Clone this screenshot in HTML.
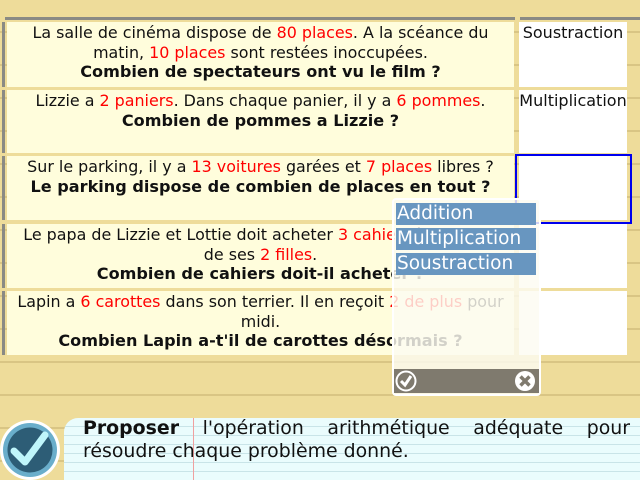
<!DOCTYPE html>
<html><head><meta charset="utf-8"><style>
*{margin:0;padding:0;box-sizing:border-box}
body{width:640px;height:480px;overflow:hidden;position:relative;font-family:"DejaVu Sans","Liberation Sans",sans-serif;
background:#eedc9a repeating-linear-gradient(to bottom,transparent 0,transparent 31px,#d9c584 31px,#d9c584 33px);}
.abs{position:absolute}
.q{position:absolute;left:7px;width:507px;background:#fffddc;text-align:center;font-size:15.9px;line-height:19.5px;color:#111;padding-top:1px;white-space:nowrap}
.q b{font-size:16.1px}
.r{color:#f00}
.a{position:absolute;left:519px;width:108px;background:#fff;text-align:center;font-size:16px;line-height:19px;color:#111;padding-top:1px;white-space:nowrap;overflow:visible}
.bar{position:absolute;left:2px;width:3px;background:#8a8a84}
.opt{position:absolute;left:396px;width:140px;height:22px;background:#6896c0;color:#fff;font-size:18.5px;line-height:21px;padding-left:1px;white-space:nowrap;overflow:hidden}
</style></head><body>
<div class="abs" style="left:5px;top:17px;width:510px;height:3px;background:#8a8a84"></div>
<div class="abs" style="left:520px;top:17px;width:120px;height:3px;background:#8a8a84"></div>
<div class="bar" style="top:22px;height:65px"></div>
<div class="bar" style="top:90px;height:63px"></div>
<div class="bar" style="top:156px;height:64px"></div>
<div class="bar" style="top:224px;height:64px"></div>
<div class="bar" style="top:291px;height:64px"></div>

<div class="q" style="top:22px;height:65px">La salle de cinéma dispose de <span class="r">80 places</span>. A la scéance du<br>matin, <span class="r">10 places</span> sont restées inoccupées.<br><b>Combien de spectateurs ont vu le film ?</b></div>
<div class="a" style="top:22px;height:65px">Soustraction</div>
<div class="q" style="top:90px;height:63px">Lizzie a <span class="r">2 paniers</span>. Dans chaque panier, il y a <span class="r">6 pommes</span>.<br><b>Combien de pommes a Lizzie ?</b></div>
<div class="a" style="top:90px;height:63px">Multiplication</div>
<div class="q" style="top:156px;height:64px">Sur le parking, il y a <span class="r">13 voitures</span> garées et <span class="r">7 places</span> libres ?<br><b>Le parking dispose de combien de places en tout ?</b></div>
<div class="a" style="top:156px;height:64px"></div>
<div class="abs" style="left:515px;top:154px;width:117px;height:70px;border:2px solid #0000ee"></div>
<div class="q" style="top:224px;height:64px">Le papa de Lizzie et Lottie doit acheter <span class="r">3 cahiers</span> à chacune<br>de ses <span class="r">2 filles</span>.<br><b>Combien de cahiers doit-il acheter ?</b></div>
<div class="a" style="top:224px;height:64px"></div>
<div class="q" style="top:291px;height:64px">Lapin a <span class="r">6 carottes</span> dans son terrier. Il en reçoit <span class="r">2 de plus</span> pour<br>midi.<br><b>Combien Lapin a-t'il de carottes désormais ?</b></div>
<div class="a" style="top:291px;height:64px"></div>

<div class="abs" style="left:392px;top:198px;width:149px;height:198px;background:rgba(253,251,242,0.82);border-radius:4px;border:2px solid #fff"></div>
<div class="opt" style="top:203px">Addition</div>
<div class="opt" style="top:228px">Multiplication</div>
<div class="opt" style="top:253px">Soustraction</div>
<div class="abs" style="left:394px;top:369px;width:145px;height:24px;background:#7f7a6e"></div>
<svg class="abs" style="left:394px;top:369px" width="145" height="24">
<circle cx="12" cy="12" r="9.5" fill="none" stroke="#fff" stroke-width="2"/>
<path d="M7 12 L11 16 L17 7" fill="none" stroke="#fff" stroke-width="3"/>
<circle cx="131" cy="12" r="10" fill="#fff"/>
<path d="M126.5 7.5 L135.5 16.5 M135.5 7.5 L126.5 16.5" stroke="#7f7a6e" stroke-width="3.5"/>
</svg>

<div class="abs" style="left:64px;top:418px;width:576px;height:62px;border-radius:14px 0 0 0;
background:#eafcfd repeating-linear-gradient(to bottom,transparent 0,transparent 8px,#c9e4e8 8px,#c9e4e8 9px)"></div>
<div class="abs" style="left:193px;top:418px;width:1px;height:62px;background:#f0a0a0"></div>
<div class="abs" style="left:83px;top:417px;width:547px;font-size:18.9px;line-height:23px;color:#111;text-align:justify;text-align-last:left">
<b>Proposer</b> l'opération arithmétique adéquate pour résoudre chaque problème donné.</div>
<svg class="abs" style="left:0;top:419px" width="62" height="61">
<circle cx="30" cy="31" r="30" fill="#fff"/>
<circle cx="30" cy="31" r="27" fill="#6aaecb"/>
<circle cx="30" cy="31" r="22.5" fill="#2d5d76"/>
<path d="M14 32 L25 43 L45 16" fill="none" stroke="#bff6fb" stroke-width="7" stroke-linecap="round" stroke-linejoin="round"/>
</svg>
</body></html>
